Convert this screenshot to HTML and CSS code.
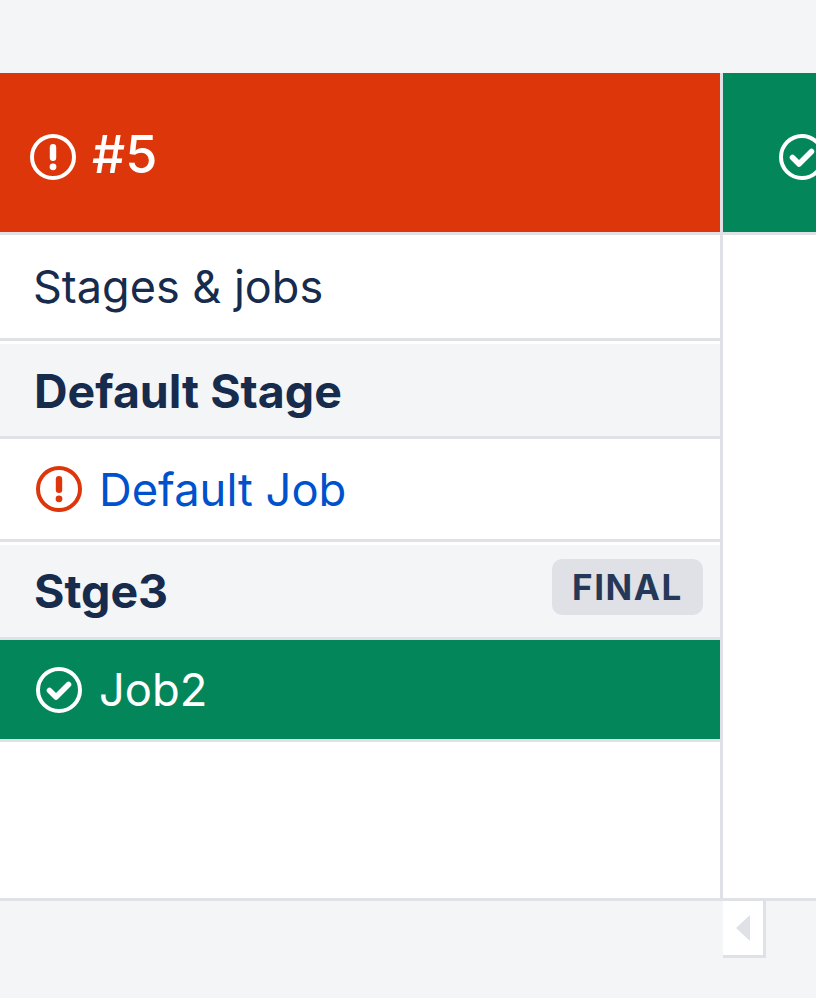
FILE: index.html
```html
<!DOCTYPE html>
<html lang="en">
<head>
<meta charset="utf-8">
<title>Build #5</title>
<link rel="stylesheet" href="styles.css">
</head>
<body>
<div class="page">
  <div class="top"></div>
  <div class="board">
    <section class="col">
      <header class="head head-red">
        <svg class="icon-lg" viewBox="0 0 46 46"><circle cx="23" cy="23" r="21" fill="none" stroke="#fff" stroke-width="4"/><rect x="19.8" y="10" width="6.4" height="17" rx="3.2" fill="#fff"/><circle cx="23" cy="32.8" r="3.4" fill="#fff"/></svg>
        <span class="head-title">#5</span>
      </header>
      <div class="row row-title">Stages &amp; jobs</div>
      <div class="stage stage-first"><span class="stage-name">Default Stage</span></div>
      <div class="row row-job">
        <svg class="icon-lg" viewBox="0 0 46 46"><circle cx="23" cy="23" r="21" fill="none" stroke="#de350b" stroke-width="4"/><rect x="19.8" y="10" width="6.4" height="17" rx="3.2" fill="#de350b"/><circle cx="23" cy="32.8" r="3.4" fill="#de350b"/></svg>
        <a class="job-link" href="#">Default Job</a>
      </div>
      <div class="stage stage-second"><span class="stage-name">Stge3</span><span class="badge">FINAL</span></div>
      <div class="row row-job row-green">
        <svg class="icon-lg" viewBox="0 0 46 46"><circle cx="23" cy="23" r="21" fill="none" stroke="#fff" stroke-width="4"/><path d="M13.5 23.5l6.5 6.5 12.5-12.5" fill="none" stroke="#fff" stroke-width="5.6" stroke-linecap="round" stroke-linejoin="round"/></svg>
        <span>Job2</span>
      </div>
    </section>
    <section class="col-next">
      <header class="head head-green">
        <svg class="icon-lg" viewBox="0 0 46 46"><circle cx="23" cy="23" r="21" fill="none" stroke="#fff" stroke-width="4"/><path d="M13.5 23.5l6.5 6.5 12.5-12.5" fill="none" stroke="#fff" stroke-width="5.6" stroke-linecap="round" stroke-linejoin="round"/></svg>
      </header>
    </section>
  </div>
  <div class="bottom">
    <button class="collapse" type="button" aria-label="Collapse"><span class="arrow"></span></button>
  </div>
</div>
</body>
</html>
```
FILE: styles.css
```css
* { box-sizing: border-box; }
html, body { margin: 0; padding: 0; }
body {
  background: #f4f5f7;
  font-family: Inter, "Noto Sans", sans-serif;
  color: #172b4d;
}
.page { width: 816px; height: 998px; overflow: hidden; display: flex; flex-direction: column; }
.top { height: 73px; flex: none; }
.board {
  height: 828px;
  flex: none;
  display: flex;
  background: #fff;
  border-bottom: 3px solid #dfe1e6;
}
.col {
  width: 723px;
  flex: none;
  border-right: 3px solid #dfe1e6;
  display: flex;
  flex-direction: column;
}
.col-next { flex: 1; min-width: 0; overflow: hidden; }
.head {
  height: 162px;
  flex: none;
  display: flex;
  align-items: center;
  border-bottom: 3px solid #dfe1e6;
  color: #fff;
}
.head-red { background: #dd360b; padding-left: 30px; gap: 16px; background-clip: padding-box; }
.head-green { background: #03875a; padding-left: 56px; background-clip: padding-box; }
.head .icon-lg { margin-top: 9px; }
.head-title { font-size: 52px; font-weight: 500; line-height: 60px; margin-top: 5px; }
.icon-lg { width: 46px; height: 46px; flex: none; display: block; }
.row {
  display: flex;
  align-items: center;
  background-clip: padding-box;
  border-bottom: 3px solid #dfe1e6;
  font-size: 45.3px;
}
.row-title { height: 106px; padding-left: 33px; font-size: 45px; }
.row-job { height: 103px; padding-left: 36px; gap: 17px; }
.job-link { color: #0052cc; text-decoration: none; }
.row-green { background: #03875a; color: #fff; height: 102px; }
.stage {
  display: flex;
  align-items: center;
  justify-content: space-between;
  background: #f4f5f7;
  border-top: 3px solid #fff;
  border-bottom: 3px solid #dfe1e6;
  padding: 0 17px 0 34px;
  font-weight: 700;
}
.stage-first { height: 98px; padding-top: 1px; }
.stage-second { height: 98px; }
.stage-name { font-size: 46.5px; }
.badge {
  background: #dfe1e6;
  border-radius: 10px;
  font-size: 35px;
  line-height: 56px;
  height: 56px;
  width: 151px;
  text-align: center;
  letter-spacing: 1.6px;
  color: #253858;
  margin-top: -9px;
}
.bottom { flex: 1; padding-left: 723px; }
.collapse {
  display: flex;
  align-items: center;
  padding: 0 0 0 13px;
  width: 43px;
  height: 57px;
  background: #fff;
  border: 0;
  border-right: 3px solid #dfe1e6;
  border-bottom: 3px solid #dfe1e6;
}
.arrow {
  width: 0;
  height: 0;
  border-top: 13.5px solid transparent;
  border-bottom: 13.5px solid transparent;
  border-right: 14px solid #dfe1e6;
}
```
